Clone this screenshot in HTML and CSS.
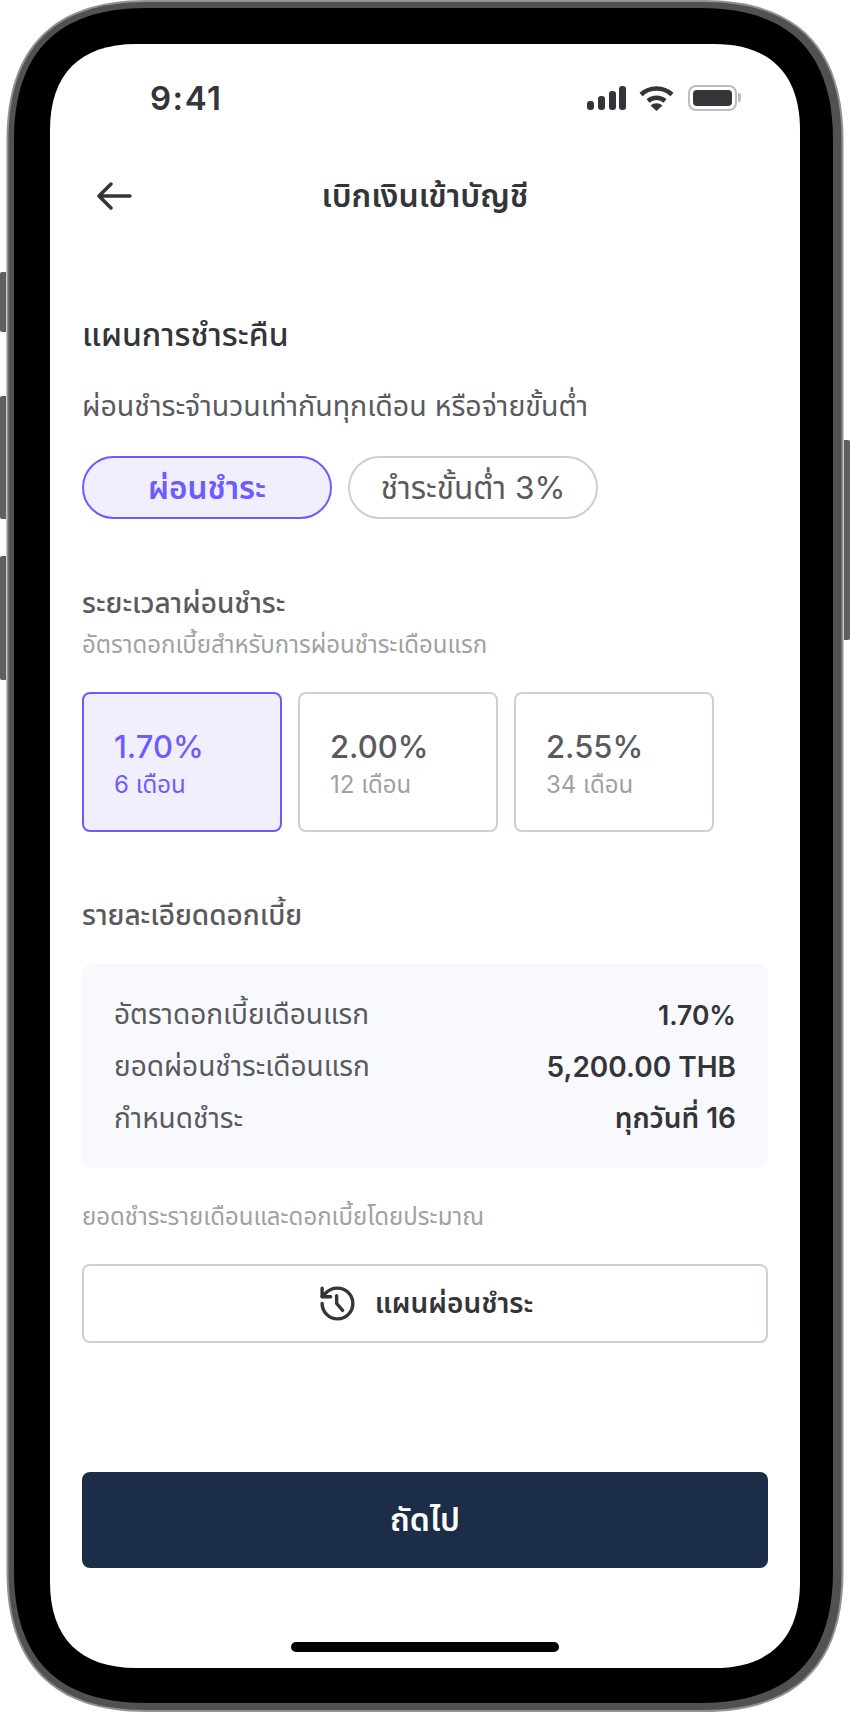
FILE: index.html
```html
<!DOCTYPE html>
<html lang="th">
<head>
    <meta charset="UTF-8">
    <meta name="viewport" content="width=device-width, initial-scale=1.0">
    <title>เบิกเงินเข้าบัญชี</title>
    <link rel="stylesheet" href="styles.css">
</head>
<body>
    <div class="device">
        <!-- side buttons -->
        <span class="side-btn mute"></span>
        <span class="side-btn vol-up"></span>
        <span class="side-btn vol-down"></span>
        <span class="side-btn power"></span>

        <!-- phone body, squircle corners can't be done with border-radius -->
        <svg class="frame" width="850" height="1712" viewBox="0 0 850 1712">
            <path class="rim-light" d="M6.5 140 C6.5 47 53.5 0 146.5 0 H703.5 C796.5 0 843.5 47 843.5 140 V1572 C843.5 1665 796.5 1712 703.5 1712 H146.5 C53.5 1712 6.5 1665 6.5 1572 Z" />
            <path class="rim-dark" d="M8.5 140 C8.5 48 54.5 2 146.5 2 H703.5 C795.5 2 841.5 48 841.5 140 V1572 C841.5 1664 795.5 1710 703.5 1710 H146.5 C54.5 1710 8.5 1664 8.5 1572 Z" />
            <path class="body-black" d="M14 140 C14 52 58 8 146 8 H701 C789 8 833 52 833 140 V1571 C833 1659 789 1703 701 1703 H146 C58 1703 14 1659 14 1571 Z" />
            <path class="glass" d="M50 130 C50 74 80 44 136 44 H714 C770 44 800 74 800 130 V1582 C800 1638 770 1668 714 1668 H136 C80 1668 50 1638 50 1582 Z" />
        </svg>

        <div class="screen">
            <div class="status-bar">
                <span class="clock">9:41</span>
                <div class="status-icons">
                    <svg class="signal" width="39" height="24" viewBox="0 0 39 24">
                        <rect x="0" y="15" width="7" height="9" rx="3" />
                        <rect x="11" y="10" width="7" height="14" rx="3" />
                        <rect x="22" y="5" width="7" height="19" rx="3" />
                        <rect x="32" y="0" width="7" height="24" rx="3" />
                    </svg>
                    <svg class="wifi" width="35" height="25" viewBox="0 0 35 25">
                        <path d="M2 8.5 A23 23 0 0 1 33 8.5" />
                        <path d="M9 15 A13 13 0 0 1 26 15" />
                        <path class="wifi-dot" d="M17.5 25 L11.5 19.5 A9 9 0 0 1 23.5 19.5 Z" />
                    </svg>
                    <div class="battery">
                        <div class="battery-fill"></div>
                        <span class="battery-cap"></span>
                    </div>
                </div>
            </div>

            <div class="nav-bar">
                <svg class="back" width="36" height="28" viewBox="0 0 36 28">
                    <path d="M34 14 H3 M15 2 L3 14 L15 26" />
                </svg>
                <span class="nav-title">เบิกเงินเข้าบัญชี</span>
            </div>

            <div class="content">
                <h1 class="plan-title">แผนการชำระคืน</h1>
                <p class="plan-sub">ผ่อนชำระจำนวนเท่ากันทุกเดือน หรือจ่ายขั้นต่ำ</p>

                <div class="pills">
                    <button class="pill active">ผ่อนชำระ</button>
                    <button class="pill">ชำระขั้นต่ำ 3%</button>
                </div>

                <h2 class="section-label term-label">ระยะเวลาผ่อนชำระ</h2>
                <p class="hint term-hint">อัตราดอกเบี้ยสำหรับการผ่อนชำระเดือนแรก</p>

                <div class="terms">
                    <div class="term active">
                        <span class="rate">1.70%</span>
                        <span class="months">6 เดือน</span>
                    </div>
                    <div class="term">
                        <span class="rate">2.00%</span>
                        <span class="months">12 เดือน</span>
                    </div>
                    <div class="term">
                        <span class="rate">2.55%</span>
                        <span class="months">34 เดือน</span>
                    </div>
                </div>

                <h2 class="section-label detail-label">รายละเอียดดอกเบี้ย</h2>

                <div class="detail-panel">
                    <div class="detail-row">
                        <span>อัตราดอกเบี้ยเดือนแรก</span>
                        <strong class="detail-rate">1.70%</strong>
                    </div>
                    <div class="detail-row">
                        <span>ยอดผ่อนชำระเดือนแรก</span>
                        <strong>5,200.00 THB</strong>
                    </div>
                    <div class="detail-row">
                        <span>กำหนดชำระ</span>
                        <strong>ทุกวันที่ 16</strong>
                    </div>
                </div>

                <p class="hint panel-note">ยอดชำระรายเดือนและดอกเบี้ยโดยประมาณ</p>

                <button class="schedule-btn">
                    <svg width="41" height="41" viewBox="0 0 24 24">
                        <path d="M3 12a9 9 0 1 0 9-9 9.75 9.75 0 0 0-6.74 2.74L3 8" />
                        <path d="M3 3v5h5" />
                        <path d="M11.5 7.5v4.5l3.5 4" />
                    </svg>
                    แผนผ่อนชำระ
                </button>

                <button class="next-btn">ถัดไป</button>
            </div>

            <div class="home-indicator"></div>
        </div>
    </div>
</body>
</html>
```

FILE: styles.css
```css
* {
    box-sizing: border-box;
}

body {
    margin: 0;
    width: 850px;
    height: 1712px;
    background: #fff;
    font-family: Inter, "Noto Sans", "Noto Sans Thai", sans-serif;
    color: #333538;
    overflow: hidden;
}

h1, h2, p {
    margin: 0;
    font-weight: 400;
}

button {
    font-family: inherit;
    cursor: pointer;
}

.device {
    position: relative;
    width: 850px;
    height: 1712px;
    padding: 44px 50px;
}

.frame {
    position: absolute;
    top: 0;
    left: 0;
}

.rim-light { fill: #929292; }
.rim-dark { fill: #515151; }
.body-black { fill: #000; }
.glass { fill: #fff; }

.side-btn {
    position: absolute;
    width: 6px;
    background: #5f5f5f;
    border-radius: 2px 0 0 2px;
}

.mute { left: 0; top: 272px; height: 60px; }
.vol-up { left: 0; top: 396px; height: 123px; }
.vol-down { left: 0; top: 556px; height: 124px; }
.power { right: 0; top: 440px; height: 200px; border-radius: 0 2px 2px 0; }

.screen {
    position: relative;
    height: 1624px;
}

/* status bar */
.status-bar {
    height: 108px;
    padding: 0 58px 0 100px;
    display: flex;
    justify-content: space-between;
    align-items: center;
}

.clock {
    font-size: 33px;
    font-weight: 600;
    letter-spacing: 1.5px;
}

.status-icons {
    display: flex;
    align-items: center;
    gap: 13px;
}

.signal {
    fill: #333538;
}

.wifi {
    margin-right: 1px;
    fill: none;
    stroke: #333538;
    stroke-width: 4.5;
}

.wifi-dot {
    fill: #333538;
    stroke: none;
}

.battery {
    position: relative;
    width: 49px;
    height: 26px;
    padding: 3px;
    border: 2px solid #bdbdbd;
    border-radius: 8px;
    margin-right: 5px;
}

.battery-fill {
    height: 100%;
    background: #333538;
    border-radius: 4px;
}

.battery-cap {
    position: absolute;
    right: -6px;
    top: 6px;
    width: 3px;
    height: 9px;
    background: #bdbdbd;
    border-radius: 0 2px 2px 0;
}

/* nav */
.nav-bar {
    position: relative;
    margin-top: 12px;
    height: 64px;
    display: flex;
    align-items: center;
    justify-content: center;
}

.back {
    position: absolute;
    left: 46px;
    top: 18px;
    fill: none;
    stroke: #333538;
    stroke-width: 3.5;
    stroke-linecap: round;
    stroke-linejoin: round;
}

.nav-title {
    font-size: 32px;
    font-weight: 600;
    line-height: 40px;
}

/* content */
.content {
    padding: 0 32px;
}

.plan-title {
    margin-top: 87px;
    font-size: 32px;
    font-weight: 500;
    line-height: 40px;
}

.plan-sub {
    margin-top: 32px;
    padding-top: 1px;
    height: 36px;
    font-size: 28.5px;
    line-height: 36px;
    color: #595a5e;
}

.pills {
    margin-top: 33px;
    display: flex;
    gap: 16px;
}

.pill {
    width: 250px;
    height: 63px;
    padding: 3px 0 0;
    border: 2px solid #cbd0d3;
    border-radius: 32px;
    background: #fff;
    font-size: 31.5px;
    font-weight: 400;
    color: #595a5e;
}

.pill.active {
    border-color: #6c5cff;
    background: #f1effe;
    color: #6c5cff;
    font-weight: 600;
}

.section-label {
    font-size: 28px;
    font-weight: 500;
    line-height: 36px;
    color: #595a5e;
}

.term-label {
    margin-top: 66px;
}

.hint {
    font-size: 24px;
    line-height: 28px;
    color: #9ea1a5;
}

.term-hint {
    margin-top: 10px;
}

.terms {
    margin-top: 33px;
    display: flex;
    gap: 16px;
}

.term {
    width: 200px;
    height: 140px;
    padding: 4px 0 0 30px;
    border: 2px solid #cbd0d3;
    border-radius: 8px;
    display: flex;
    flex-direction: column;
    justify-content: center;
    gap: 2px;
}

.term.active {
    border-color: #6c5cff;
    background: #f1effe;
}

.rate {
    font-size: 31px;
    font-weight: 500;
    line-height: 40px;
    color: #595a5e;
}

.months {
    font-size: 24px;
    line-height: 32px;
    color: #9ea1a5;
}

.term.active .rate,
.term.active .months {
    color: #6c5cff;
}

.detail-label {
    margin-top: 65px;
}

.detail-panel {
    margin-top: 31px;
    height: 204px;
    padding: 25px 32px;
    background: #f8f9fc;
    border-radius: 10px;
}

.detail-row {
    height: 52px;
    display: flex;
    justify-content: space-between;
    align-items: center;
    font-size: 28px;
    color: #595a5e;
}

.detail-row strong {
    font-weight: 600;
    color: #333538;
}

.detail-row .detail-rate {
    font-size: 26.5px;
}

.panel-note {
    margin-top: 35px;
}

.schedule-btn {
    margin-top: 33px;
    width: 100%;
    height: 79px;
    padding-top: 3px;
    border: 2px solid #cbd0d3;
    border-radius: 8px;
    background: #fff;
    display: flex;
    align-items: center;
    justify-content: center;
    gap: 17px;
    font-size: 28px;
    font-weight: 600;
    color: #333538;
}

.schedule-btn svg {
    margin-top: -3px;
    fill: none;
    stroke: #333538;
    stroke-width: 2;
    stroke-linecap: round;
    stroke-linejoin: round;
}

.next-btn {
    display: block;
    margin-top: 129px;
    width: 100%;
    height: 96px;
    padding-top: 3px;
    border: 0;
    border-radius: 8px;
    background: #1c2d47;
    font-size: 32px;
    font-weight: 600;
    color: #fff;
}

.home-indicator {
    margin: 74px auto 0;
    width: 268px;
    height: 10px;
    background: #000;
    border-radius: 5px;
}
```
